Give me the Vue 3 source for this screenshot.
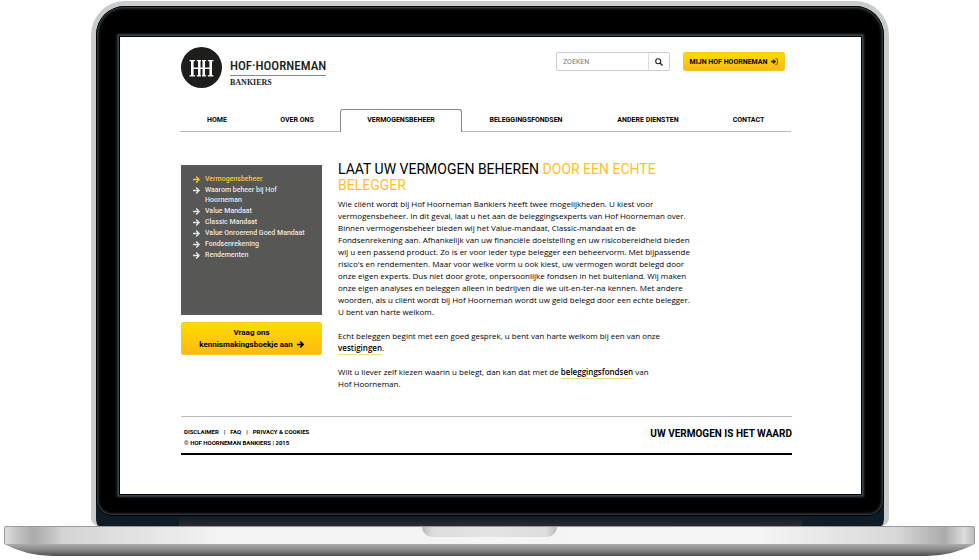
<script setup>
import { ref } from 'vue'

const query = ref('')
const nav = ['Home', 'Over ons', 'Vermogensbeheer', 'Beleggingsfondsen', 'Andere diensten', 'Contact']
const links = [
  'Vermogensbeheer',
  'Waarom beheer bij Hof Hoorneman',
  'Value Mandaat',
  'Classic Mandaat',
  'Value Onroerend Goed Mandaat',
  'Fondsenrekening',
  'Rendementen'
]
const active = 'Vermogensbeheer'
</script>

<template>
  <div class="laptop">
    <div class="lid">
      <div class="bezel">
        <div class="screen">
          <header class="header">
            <a class="logo" href="#">
              <svg class="emblem" viewBox="0 0 41 41" aria-hidden="true">
                <circle cx="20.5" cy="20.5" r="20.5" fill="#1d1d1b" />
                <path
                  fill="#fff"
                  d="M10 13.500h2.600v15.500h-2.600zM17 13.500h2.500v15.500h-2.500zM21.500 13.500h2.500v15.500h-2.500zM28.400 13.500h2.600v15.500h-2.600zM12 20.500h17v1.500H12zM8.500 13h5.600v1.200H8.500zM15.800 13h4.200v1.200h-4.200zM21 13h4.200v1.200H21zM26.900 13h5.600v1.200h-5.600zM8.500 28.300h5.600v1.200H8.500zM15.800 28.300h4.200v1.200h-4.200zM21 28.300h4.200v1.200H21zM26.900 28.300h5.600v1.200h-5.600z"
                />
              </svg>
              <span class="wordmark">
                <span class="name">HOF·HOORNEMAN</span>
                <span class="sub">BANKIERS</span>
              </span>
            </a>
            <div class="tools">
              <form class="search" @submit.prevent>
                <input v-model="query" type="text" placeholder="ZOEKEN" aria-label="Zoeken" />
                <button type="submit" aria-label="Zoek">
                  <svg viewBox="0 0 8 8" width="8" height="8" fill="none" stroke="#222">
                    <circle cx="3.200" cy="3.200" r="2.500" stroke-width="1.100" />
                    <path d="M5 5l2.500 2.500" stroke-width="1.400" />
                  </svg>
                </button>
              </form>
              <button class="gold login" type="button">
                MIJN HOF HOORNEMAN
                <svg viewBox="0 0 8 8" width="7" height="7" aria-hidden="true">
                  <path d="M0 3h2.500V1L6 4 2.500 7V5H0z" fill="#222" />
                  <path d="M5 .8h1.200Q7.400.8 7.400 2v4q0 1.200-1.200 1.200H5" fill="none" stroke="#222" stroke-width=".9" />
                </svg>
              </button>
            </div>
          </header>

          <nav class="nav">
            <a v-for="item in nav" :key="item" href="#" :class="{ current: item === active }">{{ item }}</a>
          </nav>

          <main class="main">
            <aside class="side">
              <ul class="menu">
                <li v-for="link in links" :key="link" :class="{ current: link === active }">
                  <svg viewBox="0 0 7 7" width="7" height="7" fill="none" stroke="currentColor" stroke-width="1.400" aria-hidden="true">
                    <path d="M0 3.500h6M3.200.6l2.900 2.900-2.900 2.900" />
                  </svg>
                  <a href="#">{{ link }}</a>
                </li>
              </ul>
              <button class="gold booklet" type="button">
                Vraag ons<br />kennismakingsboekje aan
                <svg viewBox="0 0 7 7" width="7" height="7" fill="none" stroke="#000" stroke-width="1.500" aria-hidden="true">
                  <path d="M0 3.500h6M3.200.6l2.900 2.900-2.900 2.900" />
                </svg>
              </button>
            </aside>

            <article class="article">
              <h1>LAAT UW VERMOGEN BEHEREN <em>DOOR EEN ECHTE<br />BELEGGER</em></h1>
              <p>
                Wie cliënt wordt bij Hof Hoorneman Bankiers heeft twee mogelijkheden. U kiest voor<br />
                vermogensbeheer. In dit geval, laat u het aan de beleggingsexperts van Hof Hoorneman over.<br />
                Binnen vermogensbeheer bieden wij het Value-mandaat, Classic-mandaat en de<br />
                Fondsenrekening aan. Afhankelijk van uw financiële doelstelling en uw risicobereidheid bieden<br />
                wij u een passend product. Zo is er voor ieder type belegger een beheervorm. Met bijpassende<br />
                risico's en rendementen. Maar voor welke vorm u ook kiest, uw vermogen wordt belegd door<br />
                onze eigen experts. Dus niet door grote, onpersoonlijke fondsen in het buitenland. Wij maken<br />
                onze eigen analyses en beleggen alleen in bedrijven die we uit-en-ter-na kennen. Met andere<br />
                woorden, als u cliënt wordt bij Hof Hoorneman wordt uw geld belegd door een echte belegger.<br />
                U bent van harte welkom.
              </p>
              <p>
                Echt beleggen begint met een goed gesprek, u bent van harte welkom bij een van onze<br />
                <a href="#">vestigingen</a>.
              </p>
              <p>
                Wilt u liever zelf kiezen waarin u belegt, dan kan dat met de <a href="#">beleggingsfondsen</a> van<br />
                Hof Hoorneman.
              </p>
            </article>
          </main>

          <footer class="footer">
            <div class="legal">
              <div class="legal-links">
                <a href="#">DISCLAIMER</a><a href="#">FAQ</a><a href="#">PRIVACY &amp; COOKIES</a>
              </div>
              <div>© HOF HOORNEMAN BANKIERS | 2015</div>
            </div>
            <div class="slogan">UW VERMOGEN IS HET WAARD</div>
          </footer>
        </div>
      </div>
      <div class="hinge"><span></span></div>
    </div>
    <div class="deck"><span class="notch"></span></div>
    <svg class="underside" viewBox="0 0 971 12" preserveAspectRatio="none" aria-hidden="true">
      <defs>
        <linearGradient id="under" x2="0" y2="1">
          <stop offset="0" stop-color="#a9abac" />
          <stop offset=".5" stop-color="#858788" />
          <stop offset="1" stop-color="#4d4d4d" />
        </linearGradient>
      </defs>
      <path d="M0 0h971Q948 12 922 12H49Q23 12 0 0z" fill="url(#under)" />
    </svg>
  </div>
</template>

<style>
body {
  margin: 0;
  background: #fff;
}
</style>

<style scoped>
.laptop {
  padding: 1px 4px 0;
  font-family: Roboto, 'Liberation Sans', sans-serif;
  font-size: 8px;
  line-height: 12px;
  color: #000;
}
.laptop *,
.laptop *::before {
  box-sizing: border-box;
}
a {
  color: inherit;
  text-decoration: none;
}
button,
input {
  font: inherit;
  color: inherit;
  margin: 0;
  padding: 0;
}
.lid {
  margin: 0 86px 0 87px;
  border: 5px solid #c8cccb;
  border-bottom: 0;
  border-radius: 34px 34px 8px 8px;
  background: #0f1c28;
  overflow: hidden;
}
.bezel {
  padding: 31px 23px 22px 24px;
  border-radius: 28px 28px 16px 16px;
  background: #000;
  box-shadow: inset 0 0 0 1px #000, inset 0 0 3px 2px #47535b;
}
.screen {
  padding: 10px 69px 39px 61px;
  background: #fff;
  box-shadow: 0 0 0 1px #000, 0 0 2px 3px #3b464e;
}
.hinge {
  height: 10px;
  padding: 2px 82px 0 83px;
}
.hinge span {
  display: block;
  height: 8px;
  background: linear-gradient(#171b24, #262c36);
}
.header {
  display: flex;
  justify-content: space-between;
  align-items: flex-start;
  height: 62px;
}
.logo {
  display: flex;
  gap: 8px;
}
.emblem {
  width: 41px;
  height: 41px;
}
.wordmark {
  display: flex;
  flex-direction: column;
  padding-top: 10px;
  color: #1d1d1b;
}
.name {
  border-bottom: 1px solid #888;
  font: 500 13px/18px 'Roboto Condensed', 'Liberation Sans Narrow', sans-serif;
}
.sub {
  font: bold 8px/14px 'Liberation Serif', serif;
}
.tools {
  display: flex;
  gap: 13px;
  padding: 5px 7px 0 0;
}
.search {
  display: flex;
  width: 114px;
  height: 19px;
  border: 1px solid #ccc;
  border-radius: 2px;
}
.search input {
  flex: 1;
  min-width: 0;
  padding-left: 6px;
  border: 0;
  background: none;
  font-size: 7px;
}
.search input::placeholder {
  color: #777;
}
.search button {
  display: flex;
  align-items: center;
  justify-content: center;
  width: 21px;
  border: 0;
  border-left: 1px solid #ddd;
  background: none;
}
.gold {
  border: 1px solid #fcc52c;
  border-radius: 2px;
  background: linear-gradient(#ffdc00, #fdb913);
  font-weight: 700;
}
.login {
  display: flex;
  align-items: center;
  justify-content: center;
  gap: 4px;
  width: 102px;
  height: 19px;
  font-size: 7px;
  white-space: nowrap;
}
.nav {
  display: grid;
  grid-template-columns: 74fr 86fr 122fr 128fr 116fr 85fr;
  margin: 0 1px 0 -1px;
}
.nav a {
  height: 23px;
  border-bottom: 1px solid #bbb;
  font-size: 7px;
  line-height: 22px;
  font-weight: 700;
  text-align: center;
  text-transform: uppercase;
}
.nav a.current {
  border: 1px solid #888;
  border-bottom: 0;
  border-radius: 3px 3px 0 0;
  line-height: 21px;
}
.main {
  display: grid;
  grid-template-columns: 141px 1fr;
  gap: 16px;
  padding: 33px 0 14px;
}
.side {
  display: flex;
  flex-direction: column;
  gap: 7px;
}
.menu {
  display: flex;
  flex-direction: column;
  gap: 1px;
  height: 150px;
  margin: 0;
  padding: 9px 12px;
  list-style: none;
  background: #575756;
  color: #e6e6e6;
  font-size: 7px;
  font-weight: 500;
  line-height: 10px;
}
.menu li {
  display: flex;
  gap: 5px;
}
.menu svg {
  flex: none;
  margin-top: 2px;
}
.menu .current {
  color: #fdc62b;
}
.booklet {
  height: 33px;
  line-height: 12px;
}
.booklet svg {
  margin-left: 2px;
  vertical-align: middle;
}
.article {
  white-space: nowrap;
}
h1 {
  margin: -4px 0 5px;
  font-size: 14px;
  line-height: 16px;
  font-weight: 400;
}
h1 em {
  font-style: normal;
  color: #fdc029;
}
p {
  margin: 0 0 12px;
  font-family: 'Open Sans', sans-serif;
  font-weight: 500;
}
p a {
  padding-bottom: 1px;
  border-bottom: 1px solid #fcd88c;
  font-weight: 600;
}
.footer {
  display: flex;
  justify-content: space-between;
  padding: 9px 0 5px;
  border-top: 1px solid #bbb;
  border-bottom: 2px solid #000;
  font-weight: 700;
}
.legal {
  padding-left: 3px;
  font-size: 6px;
  line-height: 11px;
}
.legal-links a + a::before {
  content: '|';
  margin: 0 5px;
}
.slogan {
  font-size: 10px;
  line-height: 16px;
}
.deck {
  display: flex;
  justify-content: center;
  height: 18px;
  border: 1px solid #999;
  border-width: 1px 1px 0;
  border-radius: 2px 2px 0 0;
  background: linear-gradient(90deg, #ddd 0, #c8c8c8 1%, #aaa 3%, #d4d4d4 6%, #f3f3f3 22%, #f5f5f5 78%, #d8d8d8 92%, #aaa 97%, #ddd 99%, #bbb);
}
.notch {
  width: 135px;
  height: 10px;
  border-radius: 0 0 10px 10px;
  background: linear-gradient(90deg, #bbb, #ddd 8%, #e4e4e4 50%, #ddd 92%, #bbb);
}
.underside {
  display: block;
  width: 100%;
  height: 12px;
}
</style>
